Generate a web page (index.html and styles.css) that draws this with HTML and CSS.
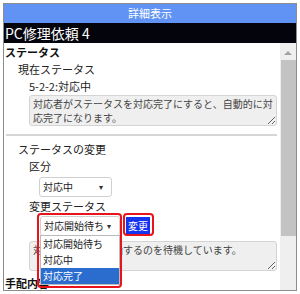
FILE: index.html
```html
<!DOCTYPE html>
<html lang="ja">
<head>
  <meta charset="UTF-8" />
  <meta name="viewport" content="width=device-width, initial-scale=1.0" />
  <title>詳細表示</title>
  <link rel="stylesheet" href="styles.css">
</head>
<body>
  <div class="dialog">
    <div class="title-bar">詳細表示</div>
    <div class="record-title">PC修理依頼 4</div>
    <div class="body">
      <div class="content">
        <div class="section">ステータス</div>
        <div class="label lv1">現在ステータス</div>
        <div class="label lv2">5-2-2:対応中</div>
        <textarea class="note" readonly>対応者がステータスを対応完了にすると、自動的に対応完了になります。</textarea>
        <hr class="divider" />

        <div class="label lv1">ステータスの変更</div>
        <div class="label lv2">区分</div>
        <div class="select kind">対応中<span class="arrow">▾</span></div>

        <div class="label lv2">変更ステータス</div>
        <div class="change-row">
          <div class="select next">対応開始待ち<span class="arrow">▾</span></div>
          <button class="btn-change">変更</button>

          <ul class="dropdown">
            <li>対応開始待ち</li>
            <li>対応中</li>
            <li class="selected">対応完了</li>
          </ul>
          <div class="mark mark-select"></div>
          <div class="mark mark-button"></div>
        </div>
        <textarea class="note note2" readonly>対応者が対応を開始するのを待機しています。</textarea>

        <div class="section section-next">手配内容</div>
      </div>
      <div class="scrollbar">
        <div class="scroll-up"></div>
        <div class="scroll-thumb"></div>
      </div>
    </div>
  </div>
</body>
</html>
```

FILE: styles.css
```css
body {
  margin: 0;
  background: #fff;
  font-family: "Noto Sans CJK JP", "Noto Sans", sans-serif;
  font-size: 11px;
  color: #222;
}

.dialog {
  margin: 3px;
  width: 292px;
  height: 286px;
  border: 1px solid #8c8c8c;
  display: flex;
  flex-direction: column;
  overflow: hidden;
}

.title-bar {
  height: 19px;
  line-height: 19px;
  background: #6093f3;
  color: #fff;
  text-align: center;
  font-size: 11px;
}

.record-title {
  height: 20px;
  line-height: 20px;
  background: #04040c;
  color: #fff;
  font-size: 14px;
  padding-left: 1px;
}

.body {
  flex: 1;
  display: flex;
  min-height: 0;
}

.content {
  flex: 1;
  padding: 1px 0 0 1px;
  overflow: hidden;
}

.section {
  font-weight: bold;
  line-height: 17px;
  color: #111;
}

.section-next {
  margin-top: 4px;
}

.label {
  line-height: 17px;
}

.lv1 {
  padding-left: 13px;
}

.lv2 {
  padding-left: 24px;
}

.note {
  display: block;
  box-sizing: border-box;
  width: 248px;
  height: 31px;
  margin: 0 0 0 24px;
  padding: 1px 3px;
  border: 1px solid #d4d4d4;
  border-radius: 3px;
  background: #efefef;
  color: #444;
  font-family: inherit;
  font-size: 10px;
  line-height: 14px;
  overflow: hidden;
}

.divider {
  margin: 8px 3px 5px 1px;
  border: none;
  border-top: 2px solid #d6d6d6;
}

.select {
  box-sizing: border-box;
  height: 20px;
  line-height: 18px;
  border: 1px solid #d0d0d0;
  border-radius: 3px;
  background: #fff;
  font-size: 10px;
  padding-left: 3px;
  position: relative;
}

.arrow {
  position: absolute;
  right: 8px;
  top: 0;
  font-size: 8px;
  color: #333;
}

.kind {
  width: 73px;
  margin: 2px 0 1px 34px;
}

.change-row {
  position: relative;
  display: flex;
  align-items: center;
  height: 21px;
  margin: 0 0 5px 35px;
}

.next {
  width: 80px;
}

.btn-change {
  margin-left: 6px;
  height: 18px;
  width: 24px;
  padding: 0;
  border: none;
  background: #1434f2;
  color: #fff;
  font-family: inherit;
  font-size: 10px;
}

.dropdown {
  position: absolute;
  left: 0;
  top: 20px;
  width: 80px;
  margin: 0;
  padding: 0;
  list-style: none;
  background: #fff;
  border: 1px solid #bbb;
  box-sizing: border-box;
  font-size: 10px;
  z-index: 2;
}

.dropdown li {
  height: 16px;
  line-height: 16px;
  padding-left: 2px;
}

.dropdown .selected {
  background: #2b6dcf;
  color: #fff;
}

.mark {
  position: absolute;
  border: 2px solid #e8141c;
  border-radius: 4px;
  z-index: 3;
}

.mark-select {
  left: -3px;
  top: -2px;
  width: 81px;
  height: 71px;
}

.mark-button {
  left: 83px;
  top: -2px;
  width: 27px;
  height: 19px;
}

.note2 {
  height: 30px;
}

.scrollbar {
  width: 16px;
  background: #efefef;
  display: flex;
  flex-direction: column;
  align-items: center;
}

.scroll-up {
  margin-top: 8px;
  width: 0;
  height: 0;
  border-left: 4px solid transparent;
  border-right: 4px solid transparent;
  border-bottom: 4px solid #a3a3a3;
}

.scroll-thumb {
  margin-top: 5px;
  width: 15px;
  height: 176px;
  background: #c3c3c3;
}
```
